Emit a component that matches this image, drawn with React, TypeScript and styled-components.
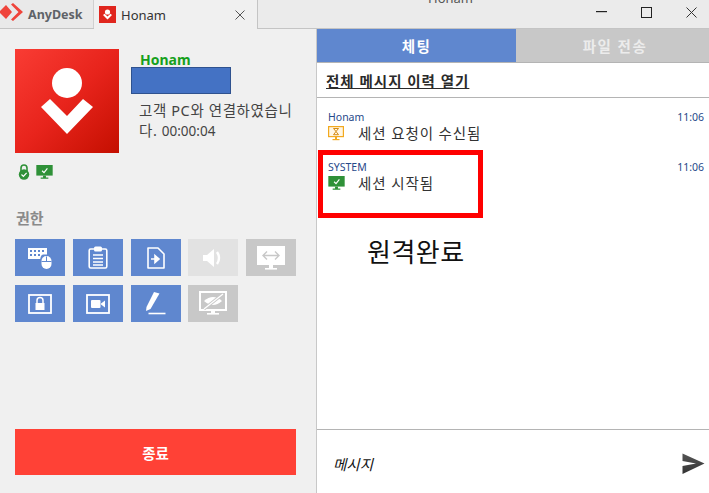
import styled, { createGlobalStyle } from 'styled-components';

const GlobalStyle = createGlobalStyle`
  html, body { margin: 0; padding: 0; background: #f0f0f0; }
  body { font-family: "Noto Sans", "Noto Sans CJK KR", sans-serif; }
  * { box-sizing: border-box; }
`;

const Window = styled.div`
  position: relative;
  width: 709px;
  height: 493px;
  overflow: hidden;
  display: flex;
  flex-direction: column;
`;

const TitleBar = styled.div`
  position: relative;
  height: 29px;
  flex: none;
  display: flex;
  background: #ebebeb;
  border-bottom: 1px solid #c4c4c4;
`;

const AppTab = styled.div`
  width: 94px;
  display: flex;
  align-items: center;
  gap: 4px;
  border-right: 1px solid #d0d0d0;
  background: #e9e9e9;
  font-size: 12.5px;
  font-weight: 700;
  color: #5f6368;
`;

const AppLogo = styled.svg`
  flex: none;
  margin-bottom: 4px;
`;

const SessionTab = styled.div`
  width: 164px;
  height: 29px;
  display: flex;
  align-items: center;
  padding: 0 12px 0 5px;
  gap: 5px;
  background: #f0f0f0;
  border-right: 1px solid #c4c4c4;
  font-size: 13px;
  color: #333;
`;

const SessionIcon = styled.svg`
  flex: none;
`;

const TabClose = styled.span`
  margin-left: auto;
  display: flex;
`;

const WindowTitle = styled.span`
  position: absolute;
  left: 428px;
  top: -11px;
  font-size: 13px;
  color: #555;
`;

const WindowButtons = styled.div`
  margin-left: auto;
  display: flex;
  align-items: center;
  gap: 34px;
  padding: 0 12px 4px 0;
`;

const Body = styled.div`
  flex: 1;
  display: flex;
  min-height: 0;
`;

const LeftPanel = styled.div`
  width: 317px;
  flex: none;
  display: flex;
  flex-direction: column;
  padding: 20px 20px 18px 15px;
  background: #f0f0f0;
  border-right: 1px solid #c8c8c8;
`;

const Profile = styled.div`
  display: flex;
  gap: 21px;
`;

const Avatar = styled.div`
  width: 104px;
  height: 104px;
  flex: none;
  display: flex;
  background: linear-gradient(135deg, #f93c34 0%, #e8241c 50%, #c40f00 100%);
`;

const ProfileText = styled.div`
  position: relative;
  width: 158px;
  padding-top: 4px;
`;

const PeerName = styled.div`
  font-size: 14px;
  line-height: 14px;
  font-weight: 700;
  color: #16a01c;
`;

const Redaction = styled.div`
  position: absolute;
  left: -9px;
  top: 18px;
  width: 100px;
  height: 27px;
  background: #4472c4;
  border: 1px solid #2f528f;
`;

const StatusText = styled.div`
  margin: 33px 0 0 -1px;
  font-size: 14.5px;
  letter-spacing: 0.6px;
  line-height: 20px;
  color: #444;
  word-break: break-all;
`;

const Elapsed = styled.span`
  font-size: 13.5px;
  letter-spacing: 0;
`;

const StatusIcons = styled.div`
  display: flex;
  align-items: center;
  gap: 6px;
  margin: 10px 0 0 3px;
  height: 18px;
`;

const SectionLabel = styled.div`
  margin-top: 27px;
  font-size: 15px;
  line-height: 20px;
  font-weight: 700;
  color: #8a8a8a;
  padding-left: 1px;
`;

const PermissionGrid = styled.div`
  display: grid;
  grid-template-columns: repeat(5, 50px);
  grid-auto-rows: 37px;
  gap: 9px 7.75px;
  margin-top: 11px;
`;

const PermissionButton = styled.div<{ $tone: 'on' | 'off' | 'faint' }>`
  display: flex;
  align-items: center;
  justify-content: center;
  background: ${(p) => (p.$tone === 'on' ? '#5f87cf' : p.$tone === 'off' ? '#c8c8c8' : '#e2e2e2')};
`;

const EndButton = styled.div`
  margin-top: auto;
  height: 46px;
  display: flex;
  align-items: center;
  justify-content: center;
  background: #ff4136;
  color: #fff;
  font-size: 14.5px;
  font-weight: 700;
`;

const RightPanel = styled.div`
  flex: 1;
  display: flex;
  flex-direction: column;
  min-width: 0;
  background: #fff;
`;

const Tabs = styled.div`
  display: flex;
  height: 34px;
  flex: none;
  border-bottom: 1px solid #b4b4b4;
`;

const ChatTab = styled.div<{ $active?: boolean }>`
  width: ${(p) => (p.$active ? '199px' : 'auto')};
  flex: ${(p) => (p.$active ? 'none' : '1')};
  display: flex;
  align-items: center;
  justify-content: center;
  padding-left: ${(p) => (p.$active ? '0' : '5px')};
  background: ${(p) => (p.$active ? '#5f87cf' : '#c8c8c8')};
  color: ${(p) => (p.$active ? '#fff' : '#ececec')};
  font-size: 14.5px;
  letter-spacing: 1.5px;
  font-weight: 700;
`;

const HistoryBar = styled.div`
  height: 35px;
  flex: none;
  display: flex;
  align-items: center;
  padding: 0 0 0 9px;
  border-bottom: 1px solid #b4b4b4;
  font-size: 14.5px;
  letter-spacing: 1px;
  font-weight: 700;
  color: #2a2a2a;
  text-decoration: underline;
`;

const MessageList = styled.div`
  flex: 1;
  display: flex;
  flex-direction: column;
  gap: 18px;
  padding: 12px 5px 0 11px;
`;

const Message = styled.div`
  display: flex;
  flex-direction: column;
`;

const MessageHead = styled.div`
  display: flex;
  justify-content: space-between;
  font-size: 10.5px;
  line-height: 14px;
  color: #27498a;
`;

const MessageBody = styled.div`
  display: flex;
  align-items: center;
  height: 18px;
  padding-bottom: 2px;
  font-size: 14.5px;
  letter-spacing: 0.9px;
  color: #333;
`;

const MessageIcon = styled.span`
  width: 30px;
  display: flex;
  margin-top: 2px;
`;

const Composer = styled.div`
  height: 64px;
  flex: none;
  display: flex;
  align-items: center;
  justify-content: space-between;
  padding: 4px 4px 0 16px;
  border-top: 1px solid #b4b4b4;
  font-size: 14.5px;
  font-style: italic;
  color: #111;
`;

const Highlight = styled.div`
  position: absolute;
  left: 318px;
  top: 150px;
  width: 165px;
  height: 68px;
  border: 5px solid #ff0000;
`;

const Annotation = styled.div`
  position: absolute;
  left: 367px;
  top: 235px;
  font-size: 26px;
  letter-spacing: 0.5px;
  line-height: 34px;
  color: #111;
`;

const GlyphSvg = styled.svg`
  display: block;
  margin: auto;
`;

function Logo() {
  return (
    <svg width="104" height="104" viewBox="0 0 104 104">
      <circle cx="52" cy="34" r="15" fill="#fff" />
      <path d="M26 58 L35 50 L52 67 L68 50 L78 58 L52 85 Z" fill="#fff" />
    </svg>
  );
}

function MonitorCheck({ size = 17 }: { size?: number }) {
  return (
    <svg width={size} height={size * 0.85} viewBox="0 0 17 15">
      <rect x="0" y="0" width="17" height="11" fill="#2f9138" />
      <path d="M6 6 L8 8 L11.5 3.5" stroke="#fff" strokeWidth="1.2" fill="none" />
      <rect x="7" y="11" width="3" height="2.5" fill="#2f9138" />
      <rect x="4.5" y="13" width="8" height="1.3" fill="#2f9138" />
    </svg>
  );
}

function LockBadge() {
  return (
    <svg width="12" height="16" viewBox="0 0 12 16">
      <path d="M3 7 V4 a3 3 0 0 1 6 0 V7" stroke="#2f9138" strokeWidth="1.6" fill="none" />
      <circle cx="6" cy="10.5" r="5.2" fill="#2f9138" />
      <path d="M3.5 10.5 L5.4 12.4 L8.6 8.8" stroke="#fff" strokeWidth="1.2" fill="none" />
    </svg>
  );
}

function HourglassMonitor() {
  return (
    <svg width="16" height="15" viewBox="0 0 16 15">
      <rect x="0.6" y="0.6" width="14.8" height="10" fill="#fff6e4" stroke="#f2a91e" strokeWidth="1.2" />
      <path d="M5.5 2.5 H10.5 L8 5.5 L10.5 8.7 H5.5 L8 5.5 Z" stroke="#d68b12" strokeWidth="1" fill="none" />
      <rect x="7" y="11" width="2" height="2" fill="#f2a91e" />
      <rect x="4.5" y="13" width="7" height="1.2" fill="#f2a91e" />
    </svg>
  );
}

function KeyboardMouse() {
  return (
    <GlyphSvg width="26" height="22" viewBox="0 0 26 22" fill="#fff">
      <path d="M1 1 H20 V7.5 H16 Q14 7.5 13.2 12 H1 Z" />
      <g fill="#5f87cf">
        <rect x="3" y="3" width="2" height="2" />
        <rect x="7" y="3" width="2" height="2" />
        <rect x="11" y="3" width="2" height="2" />
        <rect x="15" y="3" width="2" height="2" />
        <rect x="3" y="7" width="2" height="2" />
        <rect x="7" y="7" width="2" height="2" />
        <rect x="11" y="7" width="2" height="2" />
      </g>
      <rect x="14.5" y="9" width="10" height="13" rx="5" />
      <path d="M19.5 9.5 V14 M14.5 14.5 H24.5" stroke="#5f87cf" strokeWidth="1" />
    </GlyphSvg>
  );
}

function Clipboard() {
  return (
    <GlyphSvg width="20" height="23" viewBox="0 0 20 23">
      <rect x="1.2" y="3" width="17.6" height="19" rx="1.5" fill="none" stroke="#fff" strokeWidth="1.6" />
      <rect x="6" y="0.5" width="8" height="5" rx="1.5" fill="#fff" />
      <path d="M5 9 H15 M5 12.5 H15 M5 16 H15 M5 19 H15" stroke="#fff" strokeWidth="1.5" />
    </GlyphSvg>
  );
}

function FileArrow() {
  return (
    <GlyphSvg width="18" height="22" viewBox="0 0 18 22">
      <path d="M1 1 H11 L17 7 V21 H1 Z" fill="none" stroke="#fff" strokeWidth="1.6" strokeLinejoin="round" />
      <path d="M4 12 H10 M8 8.5 L12 12 L8 15.5 Z" stroke="#fff" strokeWidth="1.6" fill="#fff" />
    </GlyphSvg>
  );
}

function Speaker() {
  return (
    <GlyphSvg width="20" height="20" viewBox="0 0 20 20">
      <path d="M0 7 H4 L11 1 V19 L4 13 H0 Z" fill="#fff" />
      <path d="M14 4 Q18 10 14 16" stroke="#fff" strokeWidth="2.4" fill="none" />
    </GlyphSvg>
  );
}

function ScreenResize() {
  return (
    <GlyphSvg width="28" height="24" viewBox="0 0 28 24">
      <rect x="0" y="0" width="28" height="19" fill="#fff" />
      <path d="M6 9.5 H22 M10 5.5 L6 9.5 L10 13.5 M18 5.5 L22 9.5 L18 13.5" stroke="#c8c8c8" strokeWidth="1.4" fill="none" />
      <rect x="12" y="19" width="4" height="3" fill="#fff" />
      <rect x="8" y="22" width="12" height="1.6" fill="#fff" />
    </GlyphSvg>
  );
}

function ScreenLock() {
  return (
    <GlyphSvg width="24" height="20" viewBox="0 0 24 20">
      <rect x="1" y="1" width="22" height="18" fill="none" stroke="#fff" strokeWidth="1.8" />
      <path d="M9 9 V6.5 a3 3 0 0 1 6 0 V9" stroke="#fff" strokeWidth="1.5" fill="none" />
      <rect x="7.5" y="9" width="9" height="7" fill="#fff" />
    </GlyphSvg>
  );
}

function ScreenCamera() {
  return (
    <GlyphSvg width="24" height="20" viewBox="0 0 24 20">
      <rect x="1" y="1" width="22" height="18" fill="none" stroke="#fff" strokeWidth="1.8" />
      <rect x="5" y="6" width="9.5" height="8" rx="1" fill="#fff" />
      <path d="M15 9.5 L19 6.5 V13.5 L15 10.5 Z" fill="#fff" />
    </GlyphSvg>
  );
}

function Pen() {
  return (
    <GlyphSvg width="20" height="23" viewBox="0 0 20 23">
      <path d="M8 0 L13.5 1.5 L4.5 17 L0 19 L0.5 15 Z" fill="#fff" />
      <path d="M2.5 21.5 H19.5" stroke="#fff" strokeWidth="1.6" />
    </GlyphSvg>
  );
}

function ScreenHidden() {
  return (
    <GlyphSvg width="28" height="25" viewBox="0 0 28 25">
      <rect x="1" y="1" width="26" height="18" fill="none" stroke="#fff" strokeWidth="2" />
      <path d="M5 10 Q14 2 23 10 Q14 18 5 10 Z" fill="#fff" />
      <path d="M5 18 L24 3" stroke="#c8c8c8" strokeWidth="3" />
      <path d="M5 18 L24 3" stroke="#fff" strokeWidth="1.2" />
      <rect x="12" y="19" width="4" height="3" fill="#fff" />
      <rect x="8" y="22" width="12" height="1.6" fill="#fff" />
    </GlyphSvg>
  );
}

export default function App() {
  return (
    <Window>
      <GlobalStyle />
      <TitleBar>
        <AppTab>
          <AppLogo width="24" height="18" viewBox="0 0 24 18">
            <path d="M-1 9 L6 2 L12 9 L6 16 Z" fill="#ef443b" />
            <path d="M11 1.5 L13 0 L23 9 L13 18 L11 16.5 L18.5 9 Z" fill="#ef443b" />
          </AppLogo>
          AnyDesk
        </AppTab>
        <SessionTab>
          <SessionIcon width="17" height="17" viewBox="0 0 17 17">
            <rect width="17" height="17" fill="#e0261e" />
            <circle cx="8.5" cy="6" r="2.6" fill="#fff" />
            <path d="M4 9 L5.6 7.8 L8.5 10.6 L11.4 7.8 L13 9 L8.5 13.5 Z" fill="#fff" />
          </SessionIcon>
          Honam
          <TabClose>
            <svg width="10" height="10" viewBox="0 0 10 10">
              <path d="M0.5 0.5 L9.5 9.5 M9.5 0.5 L0.5 9.5" stroke="#555" strokeWidth="1" />
            </svg>
          </TabClose>
        </SessionTab>
        <WindowTitle>Honam</WindowTitle>
        <WindowButtons>
          <svg width="11" height="2" viewBox="0 0 11 2">
            <rect width="11" height="1.2" fill="#222" />
          </svg>
          <svg width="11" height="11" viewBox="0 0 11 11">
            <rect x="0.5" y="0.5" width="10" height="10" fill="none" stroke="#222" strokeWidth="1" />
          </svg>
          <svg width="11" height="11" viewBox="0 0 11 11">
            <path d="M0.5 0.5 L10.5 10.5 M10.5 0.5 L0.5 10.5" stroke="#333" strokeWidth="1" />
          </svg>
        </WindowButtons>
      </TitleBar>
      <Body>
        <LeftPanel>
          <Profile>
            <Avatar>
              <Logo />
            </Avatar>
            <ProfileText>
              <PeerName>Honam</PeerName>
              <Redaction />
              <StatusText>
                고객 PC와 연결하였습니다. <Elapsed>00:00:04</Elapsed>
              </StatusText>
            </ProfileText>
          </Profile>
          <StatusIcons>
            <LockBadge />
            <MonitorCheck />
          </StatusIcons>
          <SectionLabel>권한</SectionLabel>
          <PermissionGrid>
            <PermissionButton $tone="on"><KeyboardMouse /></PermissionButton>
            <PermissionButton $tone="on"><Clipboard /></PermissionButton>
            <PermissionButton $tone="on"><FileArrow /></PermissionButton>
            <PermissionButton $tone="faint"><Speaker /></PermissionButton>
            <PermissionButton $tone="off"><ScreenResize /></PermissionButton>
            <PermissionButton $tone="on"><ScreenLock /></PermissionButton>
            <PermissionButton $tone="on"><ScreenCamera /></PermissionButton>
            <PermissionButton $tone="on"><Pen /></PermissionButton>
            <PermissionButton $tone="off"><ScreenHidden /></PermissionButton>
          </PermissionGrid>
          <EndButton>종료</EndButton>
        </LeftPanel>
        <RightPanel>
          <Tabs>
            <ChatTab $active>체팅</ChatTab>
            <ChatTab>파일 전송</ChatTab>
          </Tabs>
          <HistoryBar>전체 메시지 이력 열기</HistoryBar>
          <MessageList>
            <Message>
              <MessageHead>
                <span>Honam</span>
                <span>11:06</span>
              </MessageHead>
              <MessageBody>
                <MessageIcon><HourglassMonitor /></MessageIcon>
                세션 요청이 수신됨
              </MessageBody>
            </Message>
            <Message>
              <MessageHead>
                <span>SYSTEM</span>
                <span>11:06</span>
              </MessageHead>
              <MessageBody>
                <MessageIcon><MonitorCheck /></MessageIcon>
                세션 시작됨
              </MessageBody>
            </Message>
          </MessageList>
          <Composer>
            메시지
            <svg width="23" height="22" viewBox="0 0 23 22">
              <defs>
                <linearGradient id="send" x1="0" y1="0" x2="0" y2="1">
                  <stop offset="0" stopColor="#555" />
                  <stop offset="1" stopColor="#333" />
                </linearGradient>
              </defs>
              <path d="M0.5 0.5 L22.5 10.5 L0.5 21 L0.5 13 L14 10.5 L0.5 8 Z" fill="url(#send)" />
            </svg>
          </Composer>
        </RightPanel>
      </Body>
      <Highlight />
      <Annotation>원격완료</Annotation>
    </Window>
  );
}
